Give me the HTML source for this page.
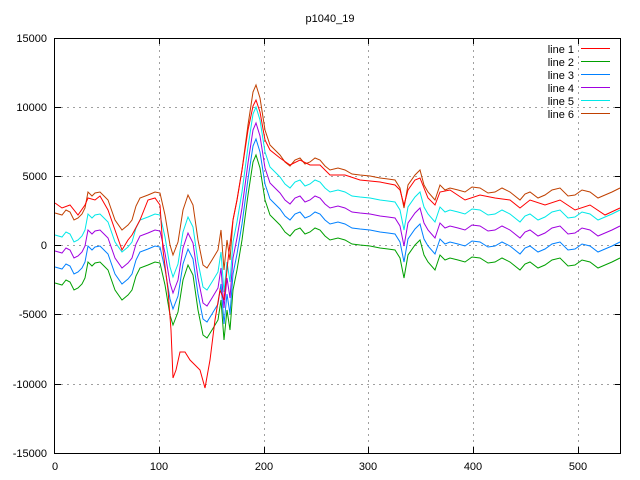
<!DOCTYPE html>
<html><head><style>
body{margin:0;background:#fff}
svg{display:block}
text{font-family:"Liberation Sans",sans-serif;font-size:11px;fill:#000}
</style></head><body>
<svg width="640" height="480" viewBox="0 0 640 480">
<defs>
<path id="g" fill="none" d="M55,283 L62,285 66,280 70,282 74,290 78,288 82,284 85,278 88,262 92,266 95,263 100,262 104,266 108,270 115,290 122,300 128,295 132,290 136,276 140,268 148,265 155,262 160,263 165,285 170,315 173,325 178,312 183,280 188,265 193,275 198,310 203,335 207,338 212,330 218,320 221,300 224,340 227,310 230,330 233,290 237,270 242,240 248,195 253,162 256,155 260,168 265,200 270,215 275,220 280,225 285,232 290,236 295,230 300,228 305,234 310,232 315,228 320,230 325,236 330,240 338,238 345,240 352,244 360,245 370,246 380,248 388,249 395,250 400,258 404,278 408,255 415,245 420,240 424,255 428,262 435,270 440,255 445,260 450,258 458,260 465,262 472,257 480,258 488,263 495,262 502,258 510,262 520,270 525,264 530,262 538,268 545,265 552,260 560,258 568,266 575,265 582,260 590,262 598,268 605,265 612,262 620,258"/>
</defs>
<g stroke="#a0a0a0" stroke-dasharray="2,4" stroke-width="1">
<line x1="55" y1="107.5" x2="621" y2="107.5"/><line x1="55" y1="176.5" x2="621" y2="176.5"/><line x1="55" y1="245.5" x2="621" y2="245.5"/><line x1="55" y1="314.5" x2="621" y2="314.5"/><line x1="55" y1="384.5" x2="621" y2="384.5"/>
<line x1="159.5" y1="38" x2="159.5" y2="453"/><line x1="264.5" y1="38" x2="264.5" y2="453"/><line x1="368.5" y1="38" x2="368.5" y2="453"/><line x1="473.5" y1="38" x2="473.5" y2="453"/><line x1="578.5" y1="38" x2="578.5" y2="453"/>
</g>
<use href="#g" stroke="#00a000"/>
<use href="#g" stroke="#0080ff" transform="translate(0,-16)"/>
<use href="#g" stroke="#a000e0" transform="translate(0,-32)"/>
<use href="#g" stroke="#00e8e8" transform="translate(0,-48)"/>
<use href="#g" stroke="#c04000" transform="translate(0,-70)"/>
<path fill="none" stroke="#ff0000" d="M55,203 L62,208 70,205 78,215 85,205 88,198 95,200 100,196 108,210 115,230 122,250 128,240 132,235 140,220 148,200 155,198 160,205 163,250 168,290 171,330 173,378 176,370 180,352 185,352 190,360 195,365 200,370 205,388 210,360 215,320 220,290 224,300 228,260 233,220 237,200 242,170 248,130 253,106 256,100 260,112 265,140 270,150 280,158 290,165 300,160 310,165 320,165 330,175 345,175 360,180 380,182 395,185 400,190 404,205 408,190 415,180 420,178 428,198 435,205 440,192 450,190 465,200 480,195 495,198 510,200 520,208 530,200 545,205 560,200 575,210 590,205 605,215 620,208"/>
<rect x="54.5" y="38.5" width="566" height="415" fill="none" stroke="#000"/>
<g stroke="#000">
<line x1="55" y1="107.5" x2="61" y2="107.5"/><line x1="55" y1="176.5" x2="61" y2="176.5"/><line x1="55" y1="245.5" x2="61" y2="245.5"/><line x1="55" y1="314.5" x2="61" y2="314.5"/><line x1="55" y1="384.5" x2="61" y2="384.5"/>
<line x1="615" y1="107.5" x2="621" y2="107.5"/><line x1="615" y1="176.5" x2="621" y2="176.5"/><line x1="615" y1="245.5" x2="621" y2="245.5"/><line x1="615" y1="314.5" x2="621" y2="314.5"/><line x1="615" y1="384.5" x2="621" y2="384.5"/>
<line x1="159.5" y1="447" x2="159.5" y2="453"/><line x1="264.5" y1="447" x2="264.5" y2="453"/><line x1="368.5" y1="447" x2="368.5" y2="453"/><line x1="473.5" y1="447" x2="473.5" y2="453"/><line x1="578.5" y1="447" x2="578.5" y2="453"/>
<line x1="159.5" y1="38" x2="159.5" y2="44"/><line x1="264.5" y1="38" x2="264.5" y2="44"/><line x1="368.5" y1="38" x2="368.5" y2="44"/><line x1="473.5" y1="38" x2="473.5" y2="44"/><line x1="578.5" y1="38" x2="578.5" y2="44"/>
</g>
<g text-anchor="end">
<text x="47" y="42">15000</text><text x="47" y="111">10000</text><text x="47" y="180">5000</text><text x="47" y="249">0</text><text x="47" y="318">-5000</text><text x="47" y="388">-10000</text><text x="47" y="457">-15000</text>
</g>
<g text-anchor="middle">
<text x="55" y="470">0</text><text x="159" y="470">100</text><text x="264" y="470">200</text><text x="368" y="470">300</text><text x="473" y="470">400</text><text x="578" y="470">500</text>
<text x="330" y="22">p1040_19</text>
</g>
<g text-anchor="end" style="font-family:'Liberation Mono',monospace">
<text x="574" y="53">line 1</text><text x="574" y="66">line 2</text><text x="574" y="79">line 3</text><text x="574" y="92">line 4</text><text x="574" y="105">line 5</text><text x="574" y="118">line 6</text>
</g>
<line x1="581" y1="48.5" x2="610" y2="48.5" stroke="#ff0000"/>
<line x1="581" y1="61.5" x2="610" y2="61.5" stroke="#00a000"/>
<line x1="581" y1="74.5" x2="610" y2="74.5" stroke="#0080ff"/>
<line x1="581" y1="87.5" x2="610" y2="87.5" stroke="#a000e0"/>
<line x1="581" y1="100.5" x2="610" y2="100.5" stroke="#00e8e8"/>
<line x1="581" y1="113.5" x2="610" y2="113.5" stroke="#c04000"/>
</svg>
</body></html>
